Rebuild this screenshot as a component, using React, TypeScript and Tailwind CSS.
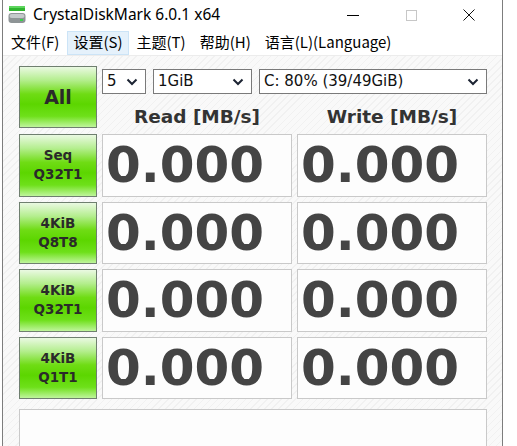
import React from 'react';

const rows = [
  { a: 'Seq', b: 'Q32T1' },
  { a: '4KiB', b: 'Q8T8' },
  { a: '4KiB', b: 'Q32T1' },
  { a: '4KiB', b: 'Q1T1' },
];

const greenBtn =
  'border border-[#6f7f6f] bg-[linear-gradient(to_bottom,#eaf9e2_0%,#b4ee8e_22%,#6fdc14_45%,#5cd600_62%,#6ee01a_82%,#bff59c_100%)] flex flex-col items-center justify-center text-[#2a2a2a] font-bold';

const Chevron = () => (
  <svg width="12" height="8" viewBox="0 0 12 8" className="shrink-0">
    <polyline points="1.5,1.5 6,6 10.5,1.5" fill="none" stroke="#1c2433" strokeWidth="2" />
  </svg>
);

const Select = ({ label, w }: { label: string; w: string }) => (
  <div className={`${w} h-[25px] bg-white border border-[#7a7a7a] flex items-center justify-between pl-[4px] pr-[7px] text-[15px] text-[#111] font-['DejaVu_Sans',sans-serif]`}>
    <span>{label}</span>
    <Chevron />
  </div>
);

const Value = () => (
  <div className="h-full bg-[#fdfdfd] border border-[#c9c9c9] flex items-center pl-[3px] text-[50px] leading-none font-bold text-[#444] font-['DejaVu_Sans',sans-serif]">
    0.000
  </div>
);

export default function App() {
  return (
    <div className="w-[517px] h-[446px] bg-white overflow-hidden font-['Noto_Sans','Noto_Sans_CJK_SC',sans-serif]">
      <div className="ml-[2px] w-[501px] h-full border-x border-[#7d7d7d] flex flex-col">
        {/* title bar */}
        <div className="h-[30px] flex items-center shrink-0">
          <svg width="18" height="20" viewBox="0 0 18 20" className="ml-[5px]">
            <rect x="1" y="1" width="16" height="5" fill="#2fb52f" />
            <rect x="1" y="1" width="16" height="2" fill="#5ed65e" />
            <rect x="0.5" y="8" width="17" height="10" rx="3" fill="#8e9496" />
            <rect x="1.5" y="9" width="15" height="4" rx="2" fill="#c4c9cb" />
            <rect x="12" y="14" width="3" height="2" fill="#39d24a" />
          </svg>
          <span className="ml-[7px] text-[15.5px] text-black">CrystalDiskMark 6.0.1 x64</span>
          <div className="ml-auto flex items-center">
            <div className="w-[58px] flex justify-center">
              <div className="w-[12px] h-px bg-black" />
            </div>
            <div className="w-[58px] flex justify-center">
              <div className="w-[11px] h-[11px] border border-[#c7c7c7]" />
            </div>
            <div className="w-[58px] flex justify-center mr-[4px]">
              <svg width="12" height="12" viewBox="0 0 12 12">
                <path d="M0.5 0.5 L11.5 11.5 M11.5 0.5 L0.5 11.5" stroke="#111" strokeWidth="1" />
              </svg>
            </div>
          </div>
        </div>
        {/* menu bar */}
        <div className="h-[25px] flex items-center text-[15px] text-black shrink-0 font-['Noto_Sans_CJK_SC','Noto_Sans',sans-serif]">
          <div className="ml-[1px] px-[6px] h-[24px] flex items-center border border-transparent">文件(F)</div>
          <div className="ml-[1px] px-[5px] h-[24px] flex items-center bg-[#e5f1fb] border border-[#cce4f7]">设置(S)</div>
          <div className="ml-[1px] px-[6px] h-[24px] flex items-center border border-transparent">主题(T)</div>
          <div className="px-[6px] h-[24px] flex items-center border border-transparent">帮助(H)</div>
          <div className="px-[6px] h-[24px] flex items-center border border-transparent">语言(L)(Language)</div>
        </div>
        {/* content */}
        <div className="flex-1 border-t border-[#ececec] pl-[16px] pt-[10px] bg-[repeating-linear-gradient(135deg,#f9f9f9_0px,#f9f9f9_4px,#f1f1f1_4px,#f1f1f1_5px)]">
          <div className="grid grid-cols-[78px_190px_190px] gap-x-[5px] h-[62px]">
            <div className={`${greenBtn} h-[62px] text-[19px] font-['DejaVu_Sans',sans-serif]`}>All</div>
            <div className="col-span-2 h-[62px] flex flex-col">
              <div className="mt-[3px] flex gap-[7px]">
                <Select label="5" w="w-[44px]" />
                <Select label="1GiB" w="w-[99px]" />
                <Select label="C: 80% (39/49GiB)" w="w-[228px]" />
              </div>
              <div className="flex-1 grid grid-cols-[190px_190px] gap-x-[5px] items-center text-[18.5px] leading-none font-bold text-[#333] font-['DejaVu_Sans',sans-serif]">
                <div className="text-center pt-[13px]">Read [MB/s]</div>
                <div className="text-center pt-[13px]">Write [MB/s]</div>
              </div>
            </div>
          </div>
          <div className="mt-[6px] grid grid-cols-[78px_190px_190px] gap-x-[5px] gap-y-[5px] auto-rows-[62.5px]">
            {rows.map((r, i) => (
              <React.Fragment key={i}>
                <div className={`${greenBtn} text-[13.5px] leading-[19px] font-['DejaVu_Sans',sans-serif]`}>
                  <span>{r.a}</span>
                  <span>{r.b}</span>
                </div>
                <Value />
                <Value />
              </React.Fragment>
            ))}
          </div>
          <div className="mt-[10px] w-[468px] h-[40px] bg-[#fdfdfd] border border-[#c9c9c9]" />
        </div>
      </div>
    </div>
  );
}
